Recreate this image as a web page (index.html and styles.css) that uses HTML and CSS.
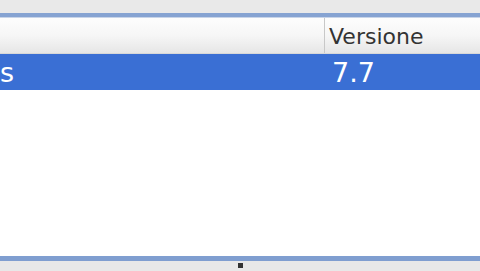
FILE: index.html
```html
<!DOCTYPE html>
<html lang="it">
<head>
  <meta charset="UTF-8" />
  <title>Versione</title>
  <link rel="stylesheet" href="styles.css">
</head>
<body>
  <div class="topbar"></div>
  <div class="table">
    <div class="header">
      <div class="col col-name"></div>
      <div class="col col-version">Versione</div>
    </div>
    <div class="row selected">
      <div class="col col-name">s</div>
      <div class="col col-version">7.7</div>
    </div>
    <div class="empty"></div>
  </div>
  <div class="bottombar"><span class="grip"></span></div>
</body>
</html>
```

FILE: styles.css
```css
body {
  margin: 0;
  width: 480px;
  height: 271px;
  overflow: hidden;
  background: #fff;
  font-family: "Lucida Grande", "DejaVu Sans", sans-serif;
  display: flex;
  flex-direction: column;
}

.topbar {
  height: 13px;
  background: #e9e9e9;
  border-bottom: 4px solid #86a3d2;
}

.table {
  flex: 1;
  display: flex;
  flex-direction: column;
}

.header {
  display: flex;
  height: 35px;
  background: linear-gradient(#fdfdfd, #f6f6f6 50%, #e6e6e6);
  border-top: 1px solid #c8d4e8;
  border-bottom: 1px solid #d8d8d8;
}

.col-name {
  width: 325px;
  box-sizing: border-box;
}

.header .col-name {
  border-right: 1px solid #c8c8c8;
}

.col-version {
  flex: 1;
  padding-left: 4px;
}

.header .col {
  display: flex;
  align-items: center;
  font-size: 22px;
  color: #333;
  padding-top: 2px;
}

.row {
  display: flex;
  height: 36px;
  align-items: center;
  font-size: 27px;
}

.selected {
  background: #3a6fd4;
  color: #fff;
}

.selected .col-version {
  padding-left: 7px;
}

.empty {
  flex: 1;
}

.bottombar {
  height: 10px;
  background: #e8e8e8;
  border-top: 5px solid #7f9ed0;
  position: relative;
}

.grip {
  position: absolute;
  left: 238px;
  top: 2px;
  width: 5px;
  height: 5px;
  background: #333;
}
```
